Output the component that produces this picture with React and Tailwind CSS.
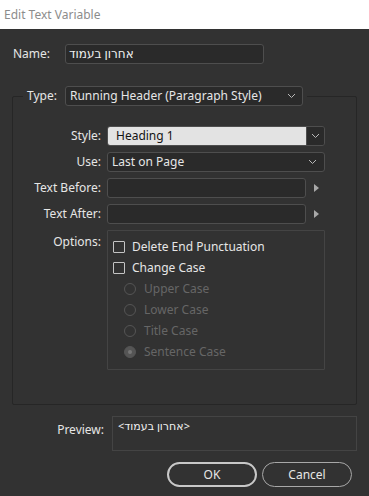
import { useState } from "react";

const font = { fontFamily: '"Noto Sans", "DejaVu Sans", sans-serif' };

// Small thin chevron used by the dropdowns
const Chevron = ({ className = "" }) => (
  <svg width="9" height="6" viewBox="0 0 9 6" className={className}>
    <polyline points="1,1 4.5,4.5 8,1" fill="none" stroke="#b8b8b8" strokeWidth="1" />
  </svg>
);

// Flyout arrow next to the text fields
const Flyout = () => (
  <svg width="6" height="8" viewBox="0 0 6 8" className="ml-[8px]">
    <polygon points="0,0 5,4 0,8" fill="#a8a8a8" />
  </svg>
);

const Checkbox = ({ label }) => (
  <label className="flex items-center h-[21px] text-[12px] text-[#e6e6e6]">
    <span className="w-[12px] h-[12px] border border-[#c4c4c4] rounded-[1px] mr-[7px]" />
    {label}
  </label>
);

const Radio = ({ label, checked }) => (
  <div className="flex items-center h-[21px] pl-[11px] text-[12px] text-[#666666]">
    <span
      className={`w-[12px] h-[12px] rounded-full border border-[#555555] mr-[8px] flex items-center justify-center ${
        checked ? "bg-[#555555]" : ""
      }`}
    >
      {checked && <span className="w-[4px] h-[4px] rounded-full bg-[#767676]" />}
    </span>
    {label}
  </div>
);

// Label + control row inside the group box
const Row = ({ label, children }) => (
  <div className="flex items-center h-[20px]">
    <span className="w-[94px] pr-[6px] text-right text-[12px] text-[#e6e6e6]">{label}</span>
    {children}
  </div>
);

export default function App() {
  const [name] = useState("אחרון בעמוד");

  return (
    <div className="w-[369px] h-[496px] bg-[#323232] flex flex-col" style={font}>
      {/* Title bar */}
      <div className="h-[29px] bg-white flex items-center px-[4px] text-[12px] text-[#8c8c8c]">
        Edit Text Variable
      </div>

      {/* Name */}
      <div className="flex items-center mt-[15px] pl-[13px] h-[20px]">
        <span className="w-[52px] text-[12px] text-[#e6e6e6]">Name:</span>
        <div className="w-[199px] h-[20px] bg-[#2a2a2a] border border-[#4e4e4e] rounded-[3px] flex items-center px-[3px] text-[12px] text-[#f0f0f0]">
          {name}
        </div>
      </div>

      {/* Type group */}
      <fieldset className="mx-[12px] mt-[22px] h-[319px] border border-[#262626] rounded-[2px] px-[10px]">
        <legend className="flex items-center px-[4px] h-[20px]">
          <span className="text-[12px] text-[#e6e6e6] mr-[8px]">Type:</span>
          <div className="w-[238px] h-[20px] bg-[#2a2a2a] border border-[#4e4e4e] rounded-[3px] flex items-center justify-between px-[4px] text-[12px] text-[#e6e6e6]">
            Running Header (Paragraph Style)
            <Chevron className="mr-[2px]" />
          </div>
        </legend>

        <div className="-ml-[10px] mt-[20px] flex flex-col gap-[6px]">
          <Row label="Style:">
            <div className="w-[218px] h-[20px] flex border border-[#4e4e4e] rounded-[3px] overflow-hidden">
              <div className="flex-1 bg-[#e3e3e3] flex items-center pl-[8px] text-[12px] text-[#141414]">
                Heading 1
              </div>
              <div className="w-[18px] bg-[#2a2a2a] border-l border-[#4e4e4e] flex items-center justify-center">
                <Chevron />
              </div>
            </div>
          </Row>
          <Row label="Use:">
            <div className="w-[218px] h-[20px] bg-[#2a2a2a] border border-[#4e4e4e] rounded-[3px] flex items-center justify-between pl-[4px] pr-[7px] text-[12px] text-[#e6e6e6]">
              Last on Page
              <Chevron />
            </div>
          </Row>
          <Row label="Text Before:">
            <div className="w-[199px] h-[20px] bg-[#2a2a2a] border border-[#4e4e4e] rounded-[3px]" />
            <Flyout />
          </Row>
          <Row label="Text After:">
            <div className="w-[199px] h-[20px] bg-[#2a2a2a] border border-[#4e4e4e] rounded-[3px]" />
            <Flyout />
          </Row>
          <div className="flex">
            <span className="w-[94px] pr-[6px] pt-[3px] text-right text-[12px] text-[#e6e6e6]">Options:</span>
            <div className="w-[218px] h-[140px] border border-[#444444] rounded-[1px] pl-[5px] pt-[5px]">
              <Checkbox label="Delete End Punctuation" />
              <Checkbox label="Change Case" />
              <Radio label="Upper Case" />
              <Radio label="Lower Case" />
              <Radio label="Title Case" />
              <Radio label="Sentence Case" checked />
            </div>
          </div>
        </div>
      </fieldset>

      {/* Preview */}
      <div className="flex mt-[11px] pl-[12px]">
        <span className="w-[100px] pr-[8px] pt-[5px] text-right text-[12px] text-[#e6e6e6]">Preview:</span>
        <div className="w-[245px] h-[35px] border border-[#444444] px-[5px] pt-[1px] text-[11px] text-[#f0f0f0]">
          {`<${name}>`}
        </div>
      </div>

      {/* Buttons */}
      <div className="flex justify-end gap-[5px] mt-[11px] pr-[17px]">
        <button className="w-[90px] h-[25px] rounded-full border-2 border-[#c8c8c8] text-[12px] text-[#e6e6e6]">
          OK
        </button>
        <button className="w-[90px] h-[25px] rounded-full border border-[#a8a8a8] text-[12px] text-[#e6e6e6]">
          Cancel
        </button>
      </div>
    </div>
  );
}
